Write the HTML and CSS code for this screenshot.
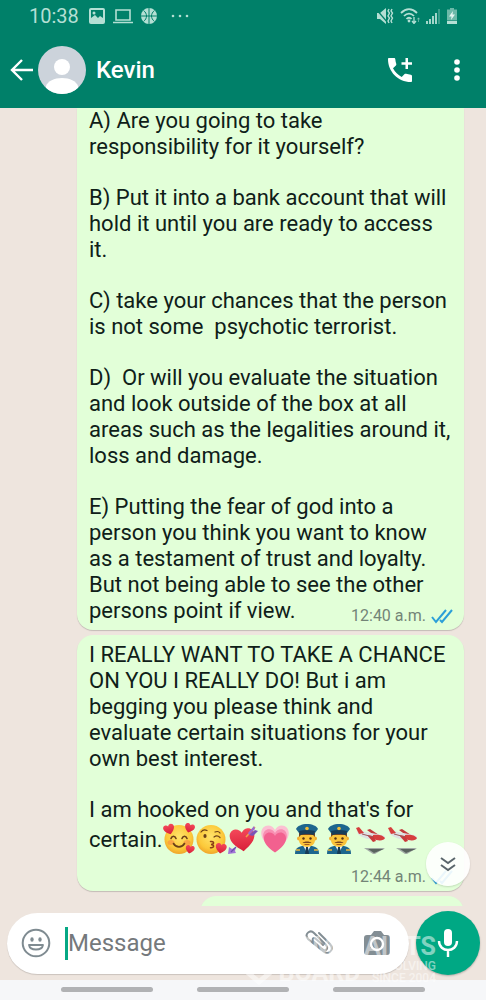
FILE: index.html
```html
<!DOCTYPE html>
<html lang="en">
<head>
    <meta charset="UTF-8">
    <meta name="viewport" content="width=device-width, initial-scale=1.0">
    <title>Chat with Kevin</title>
    <link rel="stylesheet" href="styles.css">
</head>
<body>
    <!-- Emoji artwork -->
    <svg class="sprite" width="0" height="0" aria-hidden="true">
        <defs>
            <radialGradient id="face" cx="50%" cy="40%" r="60%">
                <stop offset="0" stop-color="#ffe36a"/>
                <stop offset="0.7" stop-color="#fcc93a"/>
                <stop offset="1" stop-color="#f0a52a"/>
            </radialGradient>
            <linearGradient id="red" x1="0" y1="0" x2="0" y2="1">
                <stop offset="0" stop-color="#f4485a"/>
                <stop offset="1" stop-color="#d81f38"/>
            </linearGradient>
            <symbol id="heart" viewBox="0 0 24 22">
                <path d="M12 21C5 16 1 12 1 7 1 3.500 3.500 1 6.500 1 9 1 11 2.500 12 4.500 13 2.500 15 1 17.500 1 20.500 1 23 3.500 23 7c0 5-4 9-11 14z"/>
            </symbol>
            <symbol id="in-love" viewBox="0 0 32 32">
                <circle cx="16" cy="16.500" r="14.500" fill="url(#face)"/>
                <ellipse cx="8" cy="19.500" rx="3.500" ry="2.500" fill="#f78b45" opacity=".6"/>
                <ellipse cx="24" cy="19.500" rx="3.500" ry="2.500" fill="#f78b45" opacity=".6"/>
                <path d="M8 15.500c1-3 4-3 5 0M19 15.500c1-3 4-3 5 0M10.500 20.500c2.500 4.500 8.500 4.500 11 0" fill="none" stroke="#6b4018" stroke-width="1.600" stroke-linecap="round"/>
                <g fill="url(#red)">
                    <use href="#heart" x="0" y="1" width="12" height="11" transform="rotate(-18 6 6)"/>
                    <use href="#heart" x="21" y="0" width="11" height="10" transform="rotate(18 26 5)"/>
                    <use href="#heart" x="22" y="22" width="10" height="9" transform="rotate(12 27 26)"/>
                </g>
            </symbol>
            <symbol id="kiss" viewBox="0 0 32 32">
                <circle cx="16" cy="16.500" r="14.500" fill="url(#face)"/>
                <ellipse cx="10" cy="13" rx="1.600" ry="2" fill="#6b4018"/>
                <path d="M6 9c1.500-2 4-2.500 6-1.500M20 9c2-.8 4-.5 5 1M19 14c2-1.500 4-1.500 6 .5" fill="none" stroke="#6b4018" stroke-width="1.200" stroke-linecap="round"/>
                <path d="M15.500 18.500c4-.5 4 2.800.5 3 3.500.2 3.500 3.500-.5 3.200" fill="none" stroke="#8a3c17" stroke-width="1.500" stroke-linecap="round"/>
                <g fill="url(#red)"><use href="#heart" x="20" y="20" width="12" height="11" transform="rotate(10 26 25)"/></g>
            </symbol>
            <symbol id="arrow-heart" viewBox="0 0 32 32">
                <g fill="url(#red)"><use href="#heart" x="2" y="4" width="27" height="26" transform="rotate(-6 16 17)"/></g>
                <path d="M19 14l9-10" stroke="#f0a04a" stroke-width="1.600"/>
                <path d="M21 10l6-7 1 3-6 6z" fill="#9b6bd0"/>
                <path d="M22 12l6-5 3 1-5 5z" fill="#7a55b8"/>
                <path d="M1 31l1-7 3 2 4-2-1 4 1 2z" fill="#a274d6"/>
                <path d="M4 29l5-5" stroke="#6b4cae" stroke-width="1.200"/>
            </symbol>
            <symbol id="pink-heart" viewBox="0 0 32 32">
                <g fill="#fbc0d2"><use href="#heart" x="1" y="1" width="30" height="28"/></g>
                <g fill="#f88fb2"><use href="#heart" x="3" y="5" width="26" height="24"/></g>
                <g fill="#f2618f"><use href="#heart" x="4" y="8" width="24" height="23"/></g>
            </symbol>
            <symbol id="pilot" viewBox="0 0 32 32">
                <path d="M4 31c0-5 2-7 7-8h10c5 1 7 3 7 8z" fill="#1d668e"/>
                <path d="M12 22h8l-4 8z" fill="#fff"/>
                <path d="M15 24h2l1 7h-4z" fill="#173a56"/>
                <path d="M5 27h4M23 27h4" stroke="#edb83c" stroke-width="1.500"/>
                <circle cx="8" cy="15.500" r="2" fill="#f2ae33"/>
                <circle cx="24" cy="15.500" r="2" fill="#f2ae33"/>
                <path d="M8 10h16v7c0 4-3.500 7-8 7s-8-3-8-7z" fill="#fbc43a"/>
                <path d="M8 9h16v5l-2-2H10l-2 2z" fill="#744624"/>
                <circle cx="12.500" cy="15.500" r="1.200" fill="#553216"/>
                <circle cx="19.500" cy="15.500" r="1.200" fill="#553216"/>
                <path d="M11.500 20c1.500-2 7.500-2 9 0z" fill="#794721"/>
                <path d="M13.500 21.500h5" stroke="#a45a20"/>
                <path d="M5 6c1-3 6-5 11-5s10 2 11 5l-3 4H8z" fill="#1d668e"/>
                <path d="M8 8c5-1.500 11-1.500 16 0l-1 4c-4-1.500-10-1.500-14 0z" fill="#173e5a"/>
                <circle cx="16" cy="5.500" r="1.800" fill="#f0bb38"/>
            </symbol>
            <symbol id="plane" viewBox="0 0 32 32">
                <path d="M9 25h21l-10 6h-2z" fill="#a3aca6"/>
                <path d="M13 26h16l-10 4z" fill="#59635e"/>
                <path d="M12 7l3-1 9 6-4 1z" fill="#c23a3c"/>
                <path d="M2 8c3-2 6 0 9 1l16 3c4 1 4 4 1 5-9 1-20-1-25-6z" fill="#dde2e3"/>
                <path d="M1 5l3-1 5 6-5 1z" fill="#d63e3c"/>
                <path d="M18 12c5-1 10 0 12 3-1 3-7 3-12 1z" fill="#d63e3c"/>
                <path d="M12 12l6 1 3 5-3 1z" fill="#c9393a"/>
                <path d="M7 11l11 3" stroke="#a0575c"/>
            </symbol>
            <symbol id="ticks" viewBox="0 0 24 16">
                <path d="M2 9l4 5L16 2M10 12l2 2L22 2" fill="none" stroke="#2b9fd8" stroke-width="2"/>
            </symbol>
        </defs>
    </svg>

    <header class="header">
        <div class="status-bar">
            <span class="clock">10:38</span>
            <svg width="16" height="16" viewBox="0 0 16 16" aria-hidden="true">
                <rect x="1" y="1" width="14" height="14" rx="1" fill="none" stroke="currentColor" stroke-width="2"/>
                <path d="M2 14v-4l4-3 3 3 2-2 3 2v4z" fill="currentColor"/>
                <circle cx="5" cy="5" r="1.500" fill="currentColor"/>
            </svg>
            <svg class="laptop" width="20" height="16" viewBox="0 0 20 16" aria-hidden="true">
                <path d="M3 2h14v10H3zM0 14.500h20" fill="none" stroke="currentColor" stroke-width="1.600"/>
            </svg>
            <svg class="ball" width="16" height="16" viewBox="0 0 16 16" aria-hidden="true">
                <circle cx="8" cy="8" r="8" fill="currentColor"/>
                <path d="M8 0v16M0 8h16M2.500 2.500c4 3 4 8 0 11M13.500 2.500c-4 3-4 8 0 11" fill="none" stroke="#008069" stroke-width="1"/>
            </svg>
            <svg class="dots" width="18" height="4" viewBox="0 0 18 4" fill="currentColor" aria-hidden="true">
                <circle cx="2" cy="2" r="1.300"/><circle cx="9" cy="2" r="1.300"/><circle cx="16" cy="2" r="1.300"/>
            </svg>
            <div class="signals">
                <svg width="18" height="16" viewBox="0 0 18 16" aria-hidden="true">
                    <path d="M1 5h3l6-5v16l-6-5H1z" fill="currentColor"/>
                    <path d="M0 1l12 14" stroke="#008069" stroke-width="1.200"/>
                    <path d="M13 1l-1 2 1.500 2-1.500 3 1.500 2-1.500 3 1 2M16 1l-1 2 1.500 2-1.500 3 1.500 2-1.500 3 1 2" fill="none" stroke="currentColor" stroke-width="1.400"/>
                </svg>
                <svg width="20" height="16" viewBox="0 0 20 16" aria-hidden="true">
                    <path d="M1 5c5-5 11-5 16 0M4 8c3-3.300 7-3.300 10 0M6.500 11c1.500-1.700 3.500-1.700 5 0" fill="none" stroke="currentColor" stroke-width="1.800"/>
                    <circle cx="9" cy="13" r="1.400" fill="currentColor"/>
                    <path d="M14 9v6M12 13l2 2.500 2-2.500" fill="none" stroke="currentColor" stroke-width="1.300"/>
                    <path d="M18.500 14v-4M17.200 11.500l1.300-1.700 1.300 1.700" fill="none" stroke="currentColor" opacity=".5"/>
                </svg>
                <svg width="14" height="16" viewBox="0 0 14 16" aria-hidden="true">
                    <path d="M1 16v-3M4 16v-5M7 16V8M10 16V5" stroke="currentColor" stroke-width="1.800"/>
                    <path d="M13 16V1" stroke="currentColor" stroke-width="1.600" opacity=".4"/>
                </svg>
                <svg width="12" height="16" viewBox="0 0 12 16" aria-hidden="true">
                    <path d="M4 0h4v1.500h3v11H1v-11h3z" fill="currentColor" opacity=".6"/>
                    <path d="M1 13h10v3H1z" fill="currentColor"/>
                    <path d="M7 3L3 8.500h2.500L5 12l4-5.500H6.500z" fill="#e4f5f1"/>
                </svg>
            </div>
        </div>
        <div class="toolbar">
            <button class="icon-btn" type="button" aria-label="Back">
                <svg width="24" height="24" viewBox="0 0 24 24"><path d="M23 12H3M12 2L2 12l10 10" fill="none" stroke="#fff" stroke-width="2.400"/></svg>
            </button>
            <svg class="avatar" width="48" height="48" viewBox="0 0 48 48" role="img" aria-label="Kevin">
                <clipPath id="round"><circle cx="24" cy="24" r="24"/></clipPath>
                <circle cx="24" cy="24" r="24" fill="#ccd3db"/>
                <g clip-path="url(#round)" fill="#fff">
                    <circle cx="24" cy="21" r="8"/>
                    <path d="M8 48V40c2-5 8-8 16-8s14 3 16 8v8z"/>
                </g>
            </svg>
            <h1 class="contact">Kevin</h1>
            <button class="icon-btn call" type="button" aria-label="Add to call">
                <svg width="26" height="26" viewBox="0 0 26 26" fill="#fff">
                    <path d="M2 1h5c.8 0 1.200.5 1.300 1.200.2 1.700.5 3.300 1 4.800.2.600 0 1.100-.4 1.500L6 11.300c2 4 5 6.700 8.700 8.700l2.900-2.900c.4-.4.900-.5 1.500-.3 1.500.500 3 .8 4.700.9.700.1 1.200.6 1.200 1.300v5c0 .7-.5 1-1.200 1C11 25 1 14.500 1 2.200 1 1.500 1.300 1 2 1z"/>
                    <path d="M18.500 1h2.500v4.200h4v2.600h-4V12h-2.500V7.800h-4V5.200h4z"/>
                </svg>
            </button>
            <button class="icon-btn" type="button" aria-label="More options">
                <svg width="6" height="22" viewBox="0 0 6 22" fill="#fff"><circle cx="3" cy="3" r="2.800"/><circle cx="3" cy="11" r="2.800"/><circle cx="3" cy="19" r="2.800"/></svg>
            </button>
        </div>
    </header>

    <main class="chat">
        <article class="bubble first">
            <p>A) Are you going to take responsibility for it yourself?</p>
            <p>B) Put it into a bank account that will hold it until you are ready to access it.</p>
            <p>C) take your chances that the person is not some  psychotic terrorist.</p>
            <p>D)  Or will you evaluate the situation and look outside of the box at all areas such as the legalities around it, loss and damage.</p>
            <p>E) Putting the fear of god into a person you think you want to know as a testament of trust and loyalty. But not being able to see the other persons point if view.<span class="meta"><time>12:40 a.m.</time><svg width="24" height="16" role="img" aria-label="Read"><use href="#ticks"/></svg></span></p>
        </article>

        <article class="bubble">
            <p>I REALLY WANT TO TAKE A CHANCE ON YOU I REALLY DO! But i am begging you please think and evaluate certain situations for your own best interest.</p>
            <p>I am hooked on you and that's for<br>certain.<svg class="emoji" role="img" aria-label="smiling face with hearts"><use href="#in-love"/></svg><svg class="emoji" role="img" aria-label="face blowing a kiss"><use href="#kiss"/></svg><svg class="emoji" role="img" aria-label="heart with arrow"><use href="#arrow-heart"/></svg><svg class="emoji" role="img" aria-label="growing heart"><use href="#pink-heart"/></svg><svg class="emoji" role="img" aria-label="pilot"><use href="#pilot"/></svg><svg class="emoji" role="img" aria-label="pilot"><use href="#pilot"/></svg><svg class="emoji" role="img" aria-label="airplane departure"><use href="#plane"/></svg><svg class="emoji" role="img" aria-label="airplane departure"><use href="#plane"/></svg></p>
            <footer class="meta below"><time>12:44 a.m.</time><svg width="24" height="16" role="img" aria-label="Read"><use href="#ticks"/></svg></footer>
        </article>

        <article class="bubble next"></article>

        <button class="scroll-down" type="button" aria-label="Scroll to bottom">
            <svg width="18" height="16" viewBox="0 0 18 16"><path d="M2 2l7 5 7-5M2 9l7 5 7-5" fill="none" stroke="#5b666c" stroke-width="2"/></svg>
        </button>
    </main>

    <form class="composer">
        <div class="field">
            <button class="icon-btn" type="button" aria-label="Emoji">
                <svg width="30" height="30" viewBox="0 0 30 30">
                    <circle cx="15" cy="15" r="13.300" fill="none" stroke="#7f8b91" stroke-width="2"/>
                    <ellipse cx="11" cy="11.500" rx="1.700" ry="2.300" fill="#7f8b91"/>
                    <ellipse cx="19" cy="11.500" rx="1.700" ry="2.300" fill="#7f8b91"/>
                    <path d="M8 17h14c-1 6-13 6-14 0z" fill="none" stroke="#7f8b91" stroke-width="1.800" stroke-linejoin="round"/>
                </svg>
            </button>
            <span class="caret"></span>
            <input class="message" type="text" placeholder="Message" aria-label="Message">
            <button class="icon-btn" type="button" aria-label="Attach">
                <svg width="30" height="28" viewBox="0 0 30 28">
                    <path d="M15 4l11 11c5 6-2 12-7 7L4 10C0 5 6 0 10 4l12 12c3 4-1 7-4 4L9 12c-1-3 1-4 3-2l7 6" fill="none" stroke="#838e94" stroke-width="2" stroke-linecap="round"/>
                </svg>
            </button>
            <button class="icon-btn" type="button" aria-label="Camera">
                <svg width="26" height="26" viewBox="0 0 26 26">
                    <path d="M3 5h4l3-4h7l3 4h3q3 0 3 3v14q0 3-3 3H3q-3 0-3-3V8q0-3 3-3z" fill="#838e94"/>
                    <circle cx="13" cy="14" r="6" fill="none" stroke="#fff" stroke-width="2.400"/>
                </svg>
            </button>
        </div>
        <button class="mic" type="button" aria-label="Record voice message">
            <svg width="22" height="28" viewBox="0 0 22 28">
                <rect x="7" y="0" width="8" height="17" rx="4" fill="#fff"/>
                <path d="M2 12c0 12 18 12 18 0M11 21v7" fill="none" stroke="#fff" stroke-width="2.400"/>
            </svg>
        </button>
    </form>

    <nav class="nav-bar">
        <span></span>
        <span></span>
        <span></span>
    </nav>

    <div class="watermark" aria-hidden="true">
        <svg width="36" height="30" viewBox="0 0 36 30"><path d="M2 14l14 12 14-12" fill="none" stroke="#fff" stroke-width="5"/></svg>
        <div>
            <div class="brand">COMPLAINTS</div>
            <div class="brand-row"><span class="brand">BOARD</span><small>RESOLVING<br>SINCE 2004</small></div>
        </div>
    </div>
</body>
</html>
```
FILE: styles.css
```css
* {
    margin: 0;
    padding: 0;
    box-sizing: border-box;
}

body {
    position: relative;
    display: flex;
    flex-direction: column;
    height: 100vh;
    overflow: hidden;
    background: #eee5de;
    color: #0f2018;
    font-family: Roboto, "Noto Sans", sans-serif;
}

button {
    border: none;
    background: none;
    cursor: pointer;
}

svg {
    display: block;
    flex-shrink: 0;
}

.sprite {
    position: absolute;
}

/* Header */
.header {
    background: #008069;
    color: #fff;
}

.status-bar {
    display: flex;
    align-items: center;
    gap: 8px;
    height: 32px;
    padding: 0 28px 0 29px;
    color: #b4dfd4;
}

.clock {
    margin-right: 2px;
    font-size: 20px;
}

.dots {
    margin-left: 6px;
}

.signals {
    display: flex;
    gap: 6px;
    margin-left: auto;
}

.toolbar {
    display: flex;
    align-items: center;
    height: 76px;
    padding: 0 26px 0 10px;
}

.icon-btn {
    display: flex;
}

.avatar {
    margin: 0 10px 0 4px;
}

.contact {
    flex: 1;
    font-size: 24px;
    font-weight: 500;
}

.call {
    margin-right: 41px;
}

/* Messages */
.chat {
    position: relative;
    flex: 1;
    min-height: 0;
    display: flex;
    flex-direction: column;
    gap: 5px;
    padding: 0 22px 0 77px;
    overflow: hidden;
}

.bubble {
    flex-shrink: 0;
    padding: 7px 10px 4px 12px;
    border-radius: 16px;
    background: #e2ffd8;
    box-shadow: 0 1px 1px rgba(0, 0, 0, 0.18);
    font-size: 22px;
    line-height: 26px;
}

.bubble.first {
    padding-top: 0;
    border-radius: 0 0 16px 16px;
}

.bubble.next {
    height: 60px;
    margin-left: 123px;
}

.bubble p {
    display: flow-root;
    white-space: pre-wrap;
}

.bubble p + p {
    margin-top: 25px;
}

.emoji {
    display: inline-block;
    width: 32px;
    height: 32px;
    vertical-align: -8px;
}

.meta {
    display: flex;
    float: right;
    align-items: center;
    gap: 4px;
    margin-top: 8px;
    color: #738477;
    font-size: 16px;
    line-height: 20px;
}

.meta.below {
    float: none;
    justify-content: flex-end;
    margin-top: 12px;
}

.scroll-down {
    position: absolute;
    right: 16px;
    bottom: 20px;
    display: flex;
    align-items: center;
    justify-content: center;
    width: 44px;
    height: 44px;
    border-radius: 50%;
    background: rgba(255, 255, 255, 0.9);
    box-shadow: 0 1px 2px rgba(0, 0, 0, 0.15);
}

/* Message box */
.composer {
    display: flex;
    align-items: center;
    gap: 7px;
    height: 74px;
    padding: 0 6px 0 7px;
}

.field {
    flex: 1;
    min-width: 0;
    display: flex;
    align-items: center;
    height: 61px;
    padding: 0 19px 0 14px;
    border-radius: 31px;
    background: #fff;
    box-shadow: 0 1px 1px rgba(0, 0, 0, 0.15);
}

.caret {
    width: 3px;
    height: 33px;
    margin-left: 14px;
    background: #06a884;
}

.message {
    flex: 1;
    min-width: 0;
    border: none;
    outline: none;
    background: none;
    font-family: inherit;
    font-size: 24px;
}

.message::placeholder {
    color: #75797c;
}

.field .icon-btn + .icon-btn {
    margin-left: 30px;
}

.mic {
    display: flex;
    align-items: center;
    justify-content: center;
    width: 64px;
    height: 64px;
    border-radius: 50%;
    background: #00a884;
    box-shadow: 0 1px 2px rgba(0, 0, 0, 0.25);
}

/* Gesture bar */
.nav-bar {
    display: flex;
    justify-content: center;
    gap: 44px;
    height: 20px;
    padding-top: 7px;
    background: #f6f7f9;
}

.nav-bar span {
    width: 92px;
    height: 5px;
    border-radius: 3px;
    background: #b1b2b4;
}

/* Watermark */
.watermark {
    position: absolute;
    right: 50px;
    bottom: 14px;
    display: flex;
    align-items: flex-end;
    color: #fff;
    opacity: 0.5;
    pointer-events: none;
}

.brand {
    font-size: 25px;
    font-weight: 700;
    line-height: 26px;
}

.brand-row {
    display: flex;
    justify-content: space-between;
}

.brand-row small {
    font-size: 12px;
    font-weight: 500;
    line-height: 12px;
    text-align: right;
}
```
